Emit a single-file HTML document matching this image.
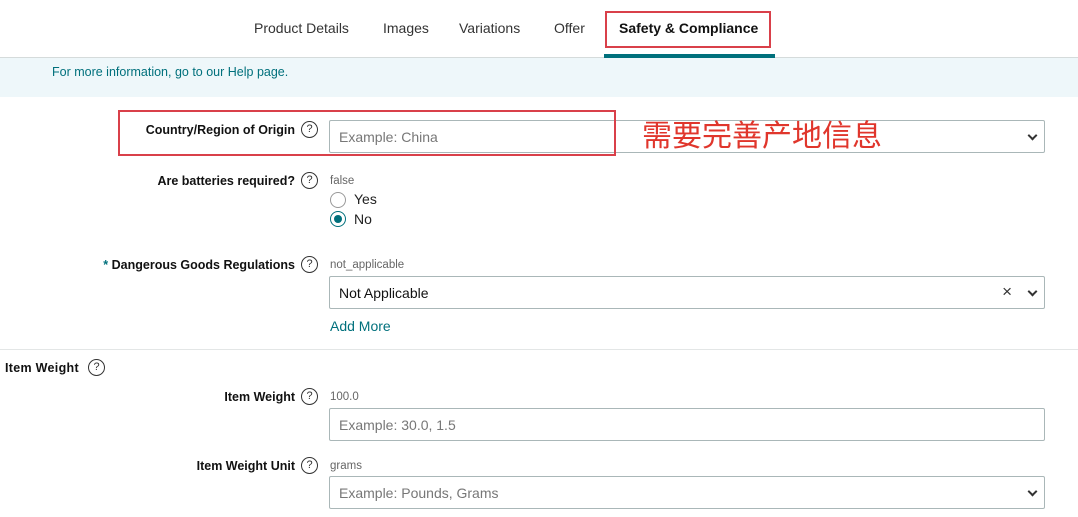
<!DOCTYPE html>
<html><head><meta charset="utf-8"><style>
*{box-sizing:border-box;margin:0;padding:0}
body{width:1078px;height:517px;background:#fff;font-family:"Liberation Sans",Arial,sans-serif;position:relative;overflow:hidden;color:#111}
.a{position:absolute;white-space:nowrap}
.tab{font-size:14px;color:#333;top:20px}
.lbl{font-size:12.5px;font-weight:bold;color:#111;text-align:right;right:783px}
.q{position:absolute;width:17px;height:17px;border:1.3px solid #333;border-radius:50%;font-size:11px;text-align:center;line-height:15px;color:#333}
.small{font-size:11.5px;color:#666;left:330px}
.inp{position:absolute;left:329px;width:716px;height:33px;border:1px solid #aab7b8;border-radius:2px;font-size:14px;color:#777;padding:8px 9px;background:#fff}
.chev{position:absolute;right:8px;top:11px;width:7px;height:7px;border-right:2px solid #333;border-bottom:2px solid #333;transform:rotate(45deg)}
</style></head><body>
<div class="a tab" style="left:254px">Product Details</div>
<div class="a tab" style="left:383px">Images</div>
<div class="a tab" style="left:459px">Variations</div>
<div class="a tab" style="left:554px">Offer</div>
<div class="a tab" style="left:619px;font-weight:bold;color:#111">Safety &amp; Compliance</div>
<div class="a" style="left:605px;top:11px;width:166px;height:37px;border:2px solid #d9404a"></div>
<div class="a" style="left:0;top:57px;width:1078px;height:40px;background:#eef7fa;border-top:1px solid #d5dbdb"></div>
<div class="a" style="left:604px;top:54px;width:171px;height:4px;background:#00707c"></div>
<div class="a" style="left:52px;top:65px;font-size:12.5px;color:#00707c">For more information, go to our Help page.</div>

<div class="a lbl" style="top:123px">Country/Region of Origin</div>
<div class="q" style="left:301px;top:121px">?</div>
<div class="inp" style="top:120px">Example: China<div class="chev"></div></div>
<div class="a" style="left:118px;top:110px;width:498px;height:46px;border:2px solid #d9404a"></div>
<div class="a" style="left:642px;top:113px;font-size:30px;color:#e0362c;font-family:'Noto Sans CJK SC',sans-serif;line-height:40px">需要完善产地信息</div>

<div class="a lbl" style="top:174px">Are batteries required?</div>
<div class="q" style="left:301px;top:172px">?</div>
<div class="a small" style="top:175px">false</div>
<div class="a" style="left:330px;top:192px;width:16px;height:16px;border:1px solid #999;border-radius:50%"></div>
<div class="a" style="left:354px;top:191px;font-size:14px;color:#222">Yes</div>
<div class="a" style="left:330px;top:211px;width:16px;height:16px;border:1px solid #00707c;border-radius:50%"></div>
<div class="a" style="left:334px;top:215px;width:8px;height:8px;background:#00707c;border-radius:50%"></div>
<div class="a" style="left:354px;top:211px;font-size:14px;color:#222">No</div>

<div class="a lbl" style="top:258px"><span style="color:#00707c">* </span>Dangerous Goods Regulations</div>
<div class="q" style="left:301px;top:256px">?</div>
<div class="a small" style="top:259px">not_applicable</div>
<div class="inp" style="top:276px;color:#111">Not Applicable<span style="position:absolute;right:32px;top:5px;font-size:17px;color:#333">×</span><div class="chev"></div></div>
<div class="a" style="left:330px;top:318px;font-size:14px;color:#00707c">Add More</div>

<div class="a" style="left:0;top:349px;width:1078px;height:1px;background:#e3e6e6"></div>
<div class="a" style="left:5px;top:361px;font-size:12.5px;font-weight:bold;letter-spacing:0.3px">Item Weight</div>
<div class="q" style="left:88px;top:359px">?</div>

<div class="a lbl" style="top:390px">Item Weight</div>
<div class="q" style="left:301px;top:388px">?</div>
<div class="a small" style="top:391px">100.0</div>
<div class="inp" style="top:408px">Example: 30.0, 1.5</div>

<div class="a lbl" style="top:459px">Item Weight Unit</div>
<div class="q" style="left:301px;top:457px">?</div>
<div class="a small" style="top:460px">grams</div>
<div class="inp" style="top:476px">Example: Pounds, Grams<div class="chev"></div></div>
</body></html>
